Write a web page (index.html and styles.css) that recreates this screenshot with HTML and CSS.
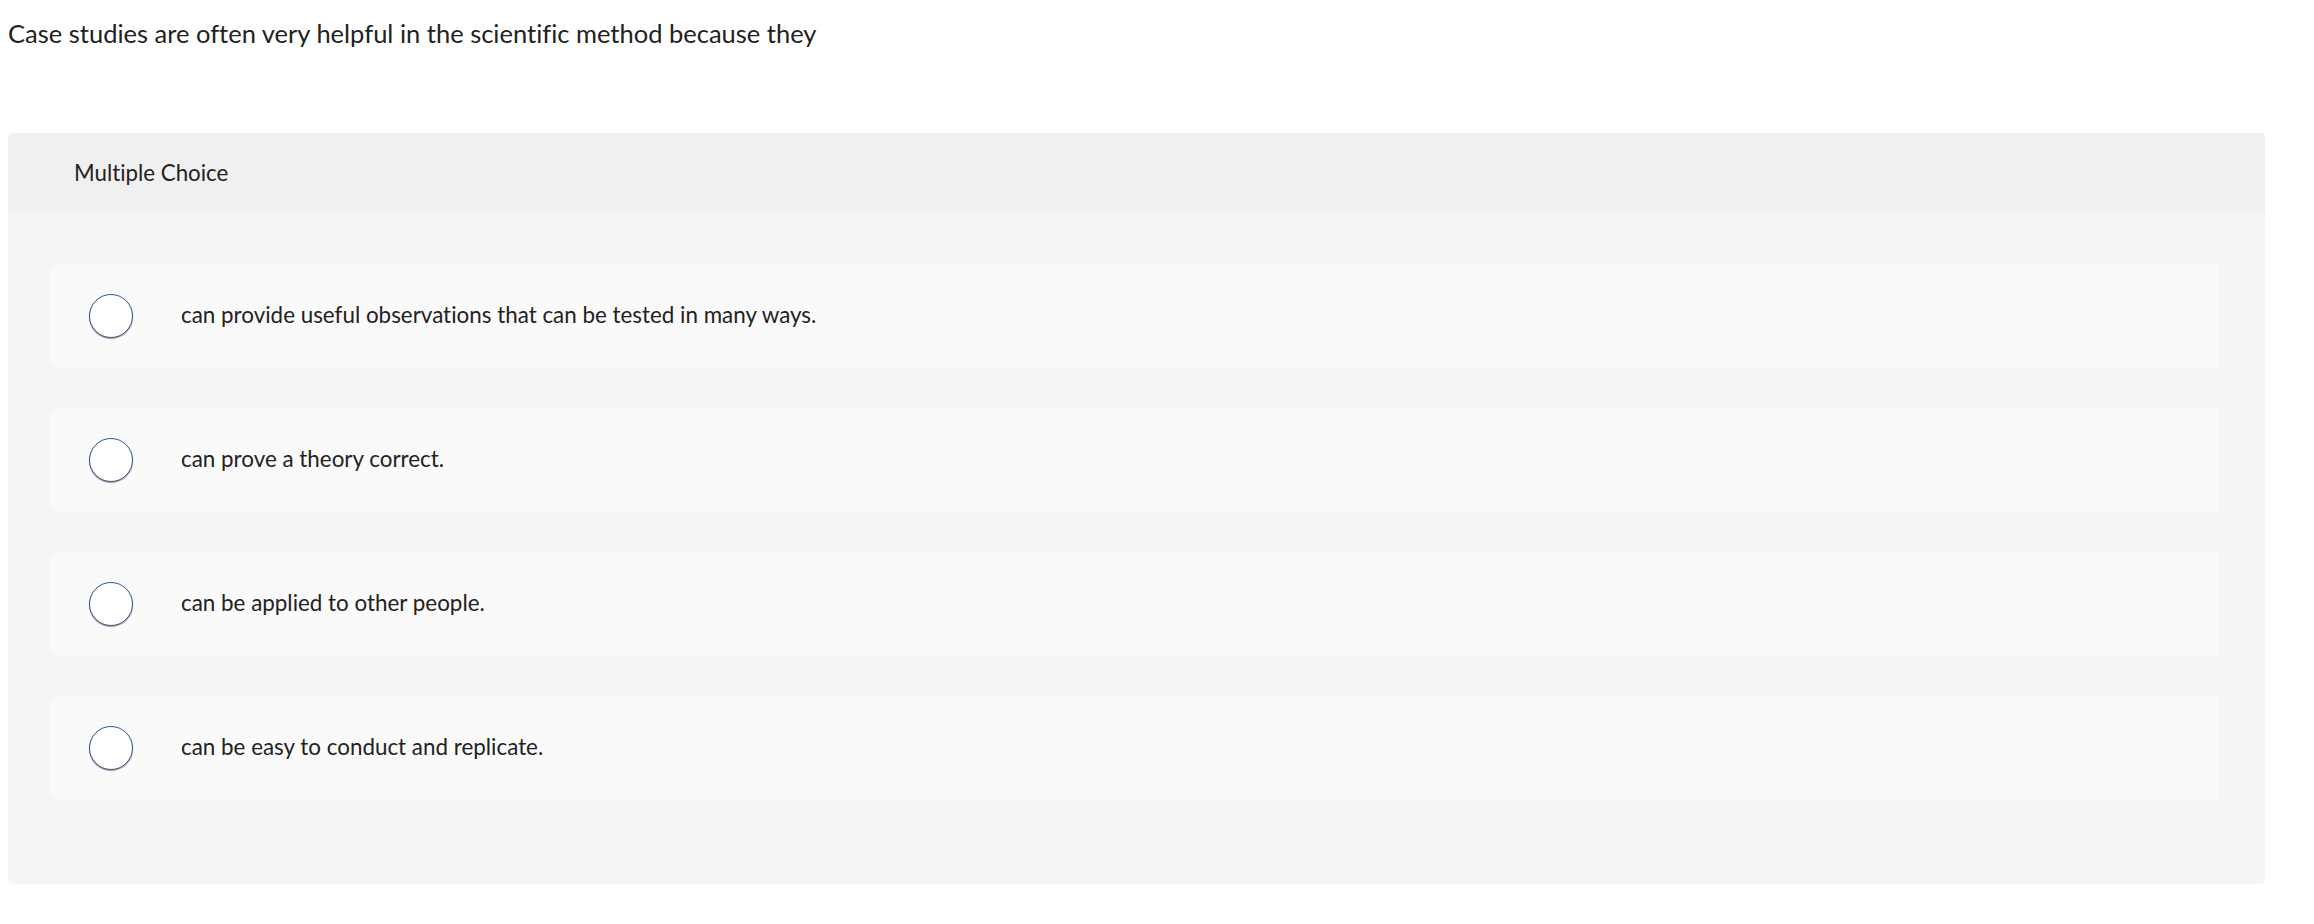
FILE: index.html
```html
<!DOCTYPE html>
<html lang="en">
<head>
<meta charset="utf-8">
<title>Multiple Choice</title>
<link rel="stylesheet" href="styles.css">
</head>
<body>
<main class="question">
  <p class="prompt">Case studies are often very helpful in the scientific method because they</p>
  <section class="panel">
    <header class="panel-header">Multiple Choice</header>
    <div class="choices">
      <label class="choice">
        <input class="radio" type="radio" name="answer">
        <span class="choice-text">can provide useful observations that can be tested in many ways.</span>
      </label>
      <label class="choice">
        <input class="radio" type="radio" name="answer">
        <span class="choice-text">can prove a theory correct.</span>
      </label>
      <label class="choice">
        <input class="radio" type="radio" name="answer">
        <span class="choice-text">can be applied to other people.</span>
      </label>
      <label class="choice">
        <input class="radio" type="radio" name="answer">
        <span class="choice-text">can be easy to conduct and replicate.</span>
      </label>
    </div>
  </section>
</main>
</body>
</html>
```
FILE: styles.css
```css
html, body {
  margin: 0;
  padding: 0;
  background: #ffffff;
}

body {
  font-family: "Lato", "Liberation Sans", sans-serif;
  font-variant-ligatures: none;
  color: #222222;
}

.question {
  padding: 0 0 0 8px;
}

.prompt {
  margin: 18px 0 0 0;
  font-size: 25.5px;
  line-height: 1.2;
  color: #222222;
}

.panel {
  margin-top: 84px;
  width: 2257px;
  background: #f5f5f5;
  border-radius: 5px;
  overflow: hidden;
}

.panel-header {
  display: flex;
  align-items: center;
  height: 80px;
  padding-left: 66px;
  background: #f0f0f0;
  font-size: 22.3px;
  color: #222222;
}

.choices {
  display: flex;
  flex-direction: column;
  gap: 40px;
  padding: 51px 46px 84px 42px;
}

.choice {
  display: flex;
  align-items: center;
  height: 104px;
  padding-left: 39px;
  background: #fafafa;
  border-radius: 7px;
  cursor: pointer;
}

.radio {
  appearance: none;
  -webkit-appearance: none;
  flex: 0 0 auto;
  box-sizing: border-box;
  width: 44px;
  height: 44px;
  margin: 0;
  border: 1.8px solid #2f5a8c;
  border-radius: 50%;
  background: #ffffff;
  box-shadow: 0 1px 1px rgba(0, 0, 0, 0.4);
}

.choice-text {
  margin-left: 48px;
  font-size: 22.4px;
  line-height: 1.2;
  color: #222222;
}
```
